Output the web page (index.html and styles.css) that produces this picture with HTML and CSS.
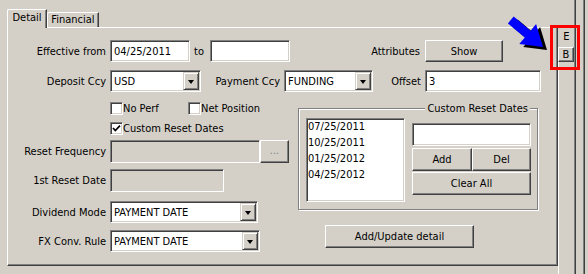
FILE: index.html
```html
<!doctype html>
<html>
<head>
<meta charset="utf-8">
<title>Detail</title>
<link rel="stylesheet" href="styles.css">
</head>

<body>
<div class="screen">
	<div class="tabctl">
		<div class="tabs">
			<div class="tab sel">Detail</div>
			<div class="tab fin">Financial</div>
		</div>
		<div class="page">
			<div class="row">
				<div class="lbl lmain">Effective from</div>
				<div class="edit ml4 w80"><span>04/25/2011</span></div>
				<div class="to">to</div>
				<div class="edit w80"></div>
				<div class="lbl lattr">Attributes</div>
				<div class="btn show">Show</div>
			</div>
			<div class="row r2">
				<div class="lbl lmain">Deposit Ccy</div>
				<div class="select ml4 w91"><span>USD</span><div class="dd"></div></div>
				<div class="lbl lpay">Payment Ccy</div>
				<div class="select ml4 w89"><span>FUNDING</span><div class="dd"></div></div>
				<div class="lbl loff">Offset</div>
				<div class="edit ml4 w116"><span>3</span></div>
			</div>
			<div class="lower">
				<div class="lcol">
					<div class="chkrow c1">
						<div class="chk nop"><div class="box"></div>No Perf</div>
						<div class="chk"><div class="box"></div>Net Position</div>
					</div>
					<div class="chkrow c2">
						<div class="chk"><div class="box"><svg width="9" height="9" viewBox="0 0 9 9"><polyline points="1,4 3.3,6.6 8,1.6" fill="none" stroke="#000" stroke-width="1.7"/></svg></div>Custom Reset Dates</div>
					</div>
					<div class="row fr">
						<div class="lbl lmain">Reset Frequency</div>
						<div class="edit off ml4 w150"></div>
						<div class="btn dots">...</div>
					</div>
					<div class="row first">
						<div class="lbl lmain">1st Reset Date</div>
						<div class="edit off ml4 w114"></div>
					</div>
					<div class="row div">
						<div class="lbl lmain">Dividend Mode</div>
						<div class="select ml4 w148"><span>PAYMENT DATE</span><div class="dd"></div></div>
					</div>
					<div class="row fx">
						<div class="lbl lmain">FX Conv. Rule</div>
						<div class="select ml4 w150"><span>PAYMENT DATE</span><div class="dd"></div></div>
					</div>
				</div>
				<div class="rcol">
					<div class="group">
						<div class="legend">Custom Reset Dates</div>
						<div class="list">
							<div>07/25/2011</div>
							<div>10/25/2011</div>
							<div>01/25/2012</div>
							<div>04/25/2012</div>
						</div>
						<div class="stack">
							<div class="edit gedit"></div>
							<div class="pair">
								<div class="btn add">Add</div>
								<div class="btn del">Del</div>
							</div>
							<div class="btn clear">Clear All</div>
						</div>
					</div>
					<div class="btn upd">Add/Update detail</div>
				</div>
			</div>
		</div>
	</div>
	<div class="side">
		<div class="etab">E</div>
		<div class="btab">B</div>
		<div class="srest"></div>
	</div>
	<div class="edge"></div>
</div>

<!-- annotation over the screenshot -->
<svg class="arrow" width="60" height="50" viewBox="500 10 60 50">
	<polygon transform="translate(4,3)" fill="#000" points="513.7,16.6 530.6,30.7 536.1,24.1 543,47 519.3,44.1 524.8,37.5 507.9,23.4"/>
	<polygon fill="#0000ff" points="513.7,16.6 530.6,30.7 536.1,24.1 543,47 519.3,44.1 524.8,37.5 507.9,23.4"/>
</svg>
<div class="mark"></div>
</body>
</html>
```

FILE: styles.css
```css
*{margin:0; padding:0; box-sizing:border-box;}
html,body{width:588px; height:274px; overflow:hidden;}
body{background:#d4d0c8; font:11px "DejaVu Sans Condensed","Liberation Sans",sans-serif; color:#000; position:relative;}
.screen{display:flex; height:274px;}

/* tab control */
.tabctl{width:558px; padding:9px 0 0 7px;}
.tabs{display:flex; align-items:flex-end; height:18px; position:relative; z-index:1;}
.tab{height:15px; line-height:13px; border:1px solid; border-bottom:none; border-color:#fff #404040 #fff #fff; box-shadow:inset -1px 0 0 #808080; border-top-left-radius:2px; background:#d4d0c8; text-align:center;}
.sel{width:40px; height:19px; margin-bottom:-1px; line-height:15px;}
.fin{width:52px; line-height:14px;}
.page{width:551px; height:239px; border:1px solid; border-color:#fff #404040 #404040 #fff; box-shadow:inset -1px -1px 0 #808080; padding-top:12px;}

/* rows */
.row{display:flex; align-items:center; height:22px;}
.r2{margin-top:8px;}
.lbl{text-align:right; white-space:nowrap;}
.lmain{width:98px;}
.lattr{width:130px;}
.lpay{width:79px;}
.loff{width:48px;}
.to{width:20px; padding-left:4px;}
.ml4{margin-left:4px;}
.w80{width:80px;}
.w89{width:89px;}
.w91{width:91px;}
.w114{width:114px;}
.w116{width:116px;}
.w148{width:148px;}
.w150{width:150px;}

/* controls */
.edit,.select,.list,.box{background:#fff; border:1px solid; border-color:#808080 #fff #fff #808080; box-shadow:inset 1px 1px 0 #404040, inset -1px -1px 0 #d4d0c8;}
.edit{height:22px; display:flex; align-items:center; padding-left:3px; white-space:nowrap;}
.off{background:#d4d0c8; height:23px;}
.select{height:22px; display:flex; align-items:center; padding:1px;}
.select span{flex:1; padding-left:2px; white-space:nowrap; overflow:hidden;}
.dd{width:16px; height:18px; background:#d4d0c8; border:1px solid; border-color:#d4d0c8 #404040 #404040 #d4d0c8; box-shadow:inset 1px 1px 0 #fff, inset -1px -1px 0 #808080; display:flex; align-items:center; justify-content:center;}
.dd:after{content:""; border-style:solid; border-width:4px 3.5px 0 3.5px; border-color:#000 transparent transparent transparent; margin-top:1px;}
.btn{height:23px; background:#d4d0c8; border:1px solid; border-color:#fff #404040 #404040 #fff; box-shadow:inset -1px -1px 0 #808080; display:flex; align-items:center; justify-content:center; white-space:nowrap;}
.show{width:78px; height:22px; margin-left:5px;}
.dots{width:29px; color:#808080; padding-bottom:3px;}

/* checkboxes */
.chkrow{display:flex; height:13px; padding-left:102px;}
.c1{margin-top:10px;}
.c2{margin-top:7px;}
.chk{display:flex; align-items:center; white-space:nowrap;}
.nop{width:78px;}
.box{width:13px; height:13px; display:flex; align-items:center; justify-content:center; margin-right:0;}
.box svg{display:block;}
.fr{height:23px; margin-top:5px;}
.first{height:23px; margin-top:6px;}
.div{margin-top:9px;}
.fx{margin-top:7px;}

/* lower part */
.lower{display:flex;}
.lcol{width:290px;}
.group{margin-top:16px; width:240px; height:102px; border:1px solid #808080; box-shadow:inset 1px 1px 0 #fff, 1px 1px 0 #fff; position:relative; display:flex; padding:9px 0 0 7px;}
.legend{position:absolute; top:-7px; right:7px; padding:0 2px; line-height:13px; background:#d4d0c8; white-space:nowrap;}
.list{width:99px; height:84px; padding:0 0 0 1px; line-height:16px;}
.stack{width:119px; margin:5px 0 0 7px;}
.gedit{height:23px;}
.pair{display:flex; margin-top:2px;}
.add{width:60px;}
.del{width:59px;}
.clear{margin-top:1px;}
.upd{width:149px; margin:15px 0 0 27px;}

/* right vertical tabs */
.side{width:18px; display:flex; flex-direction:column; border-right:1px solid #404040; box-shadow:inset -1px 0 0 #808080;}
.etab{height:19px; margin-top:28px; text-align:center; line-height:17px;}
.btab{width:16px; height:15px; border:1px solid; border-color:#fff #404040 #404040 #fff; box-shadow:inset -1px -1px 0 #808080; text-align:center; line-height:13px;}
.srest{flex:1; width:16px; border-left:1px solid #fff;}
.edge{width:2px; margin-left:7px; border-left:1px solid #808080; border-right:1px solid #404040;}

/* annotation */
.arrow{position:absolute; left:500px; top:10px;}
.mark{position:absolute; left:550px; top:25px; width:30px; height:45px; border:3px solid #ff0000;}
```
